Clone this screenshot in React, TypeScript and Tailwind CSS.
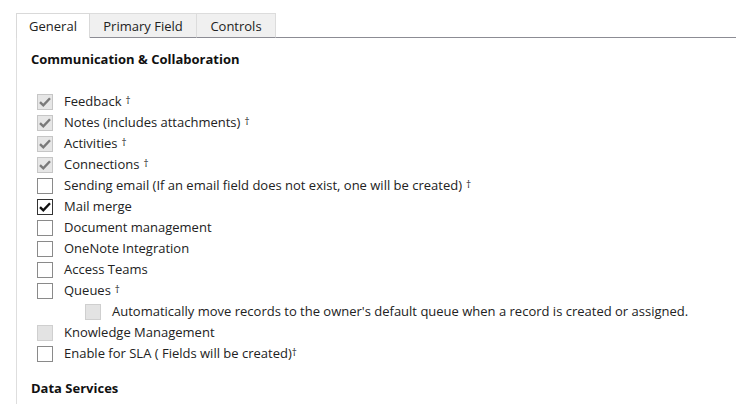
import React from "react";

type Box = "checked" | "unchecked" | "disabledChecked" | "disabled";

const Check = ({ state }: { state: Box }) => {
  const styles: Record<Box, string> = {
    checked: "bg-white border-[#333333]",
    unchecked: "bg-white border-[#8a8a8a]",
    disabledChecked: "bg-[#e6e6e6] border-[#c6c6c6]",
    disabled: "bg-[#e3e3e3] border-[#cfcfcf]",
  };
  const tick = state === "checked" ? "#111111" : "#7a7a7a";
  return (
    <span
      className={`flex h-[16px] w-[16px] shrink-0 items-center justify-center border ${styles[state]}`}
    >
      {(state === "checked" || state === "disabledChecked") && (
        <svg width="14" height="14" viewBox="0 0 14 14">
          <path
            d="M2 7.2 L5.3 10.4 L12 3.2"
            fill="none"
            stroke={tick}
            strokeWidth="2.4"
          />
        </svg>
      )}
    </span>
  );
};

const Row = ({
  state,
  label,
  dagger,
  sub,
}: {
  state: Box;
  label: string;
  dagger?: "space" | "tight";
  sub?: boolean;
}) => (
  <div className={`flex h-[21px] items-center gap-[11px] ${sub ? "pl-[48px]" : ""}`}>
    <Check state={state} />
    <span className="whitespace-nowrap">
      {label}
      {dagger && (
        <span className={`relative -top-[2px] text-[10px] ${dagger === "space" ? "ml-[4px]" : ""}`}>
          †
        </span>
      )}
    </span>
  </div>
);

export default function App() {
  const rows: { state: Box; label: string; dagger?: "space" | "tight"; sub?: boolean }[] = [
    { state: "disabledChecked", label: "Feedback", dagger: "space" },
    { state: "disabledChecked", label: "Notes (includes attachments)", dagger: "space" },
    { state: "disabledChecked", label: "Activities", dagger: "space" },
    { state: "disabledChecked", label: "Connections", dagger: "space" },
    {
      state: "unchecked",
      label: "Sending email (If an email field does not exist, one will be created)",
      dagger: "space",
    },
    { state: "checked", label: "Mail merge" },
    { state: "unchecked", label: "Document management" },
    { state: "unchecked", label: "OneNote Integration" },
    { state: "unchecked", label: "Access Teams" },
    { state: "unchecked", label: "Queues", dagger: "space" },
    {
      state: "disabled",
      label:
        "Automatically move records to the owner's default queue when a record is created or assigned.",
      sub: true,
    },
    { state: "disabled", label: "Knowledge Management" },
    { state: "unchecked", label: "Enable for SLA ( Fields will be created)", dagger: "tight" },
  ];

  return (
    <div
      className="h-[404px] w-[736px] overflow-hidden bg-white pl-[16px] pt-[13px] text-[13px] text-[#222222]"
      style={{ fontFamily: '"Open Sans", "Noto Sans", sans-serif' }}
    >
      <div className="flex h-[25px]">
        <div className="w-[74px] border-l border-r border-t border-[#d9d9d9] bg-white pt-[3px] text-center">
          General
        </div>
        <div className="w-[107px] border-b border-r border-t border-b-[#8c8c94] border-r-[#dcdcdc] border-t-[#dcdcdc] bg-[#f0f0f0] pt-[3px] text-center">
          Primary Field
        </div>
        <div className="w-[79px] border-b border-r border-t border-b-[#8c8c94] border-r-[#dcdcdc] border-t-[#dcdcdc] bg-[#f0f0f0] pt-[3px] text-center">
          Controls
        </div>
        <div className="flex-1 border-b border-[#8c8c94]" />
      </div>
      <div className="h-[400px] border-l border-[#dedede] pl-[14px] pt-[12px]">
        <h3 className="font-bold text-[#111111]">Communication &amp; Collaboration</h3>
        <div className="mt-[22px] pl-[6px]">
          {rows.map((r) => (
            <Row key={r.label} {...r} />
          ))}
        </div>
        <h3 className="mt-[14px] font-bold text-[#111111]">Data Services</h3>
      </div>
    </div>
  );
}
